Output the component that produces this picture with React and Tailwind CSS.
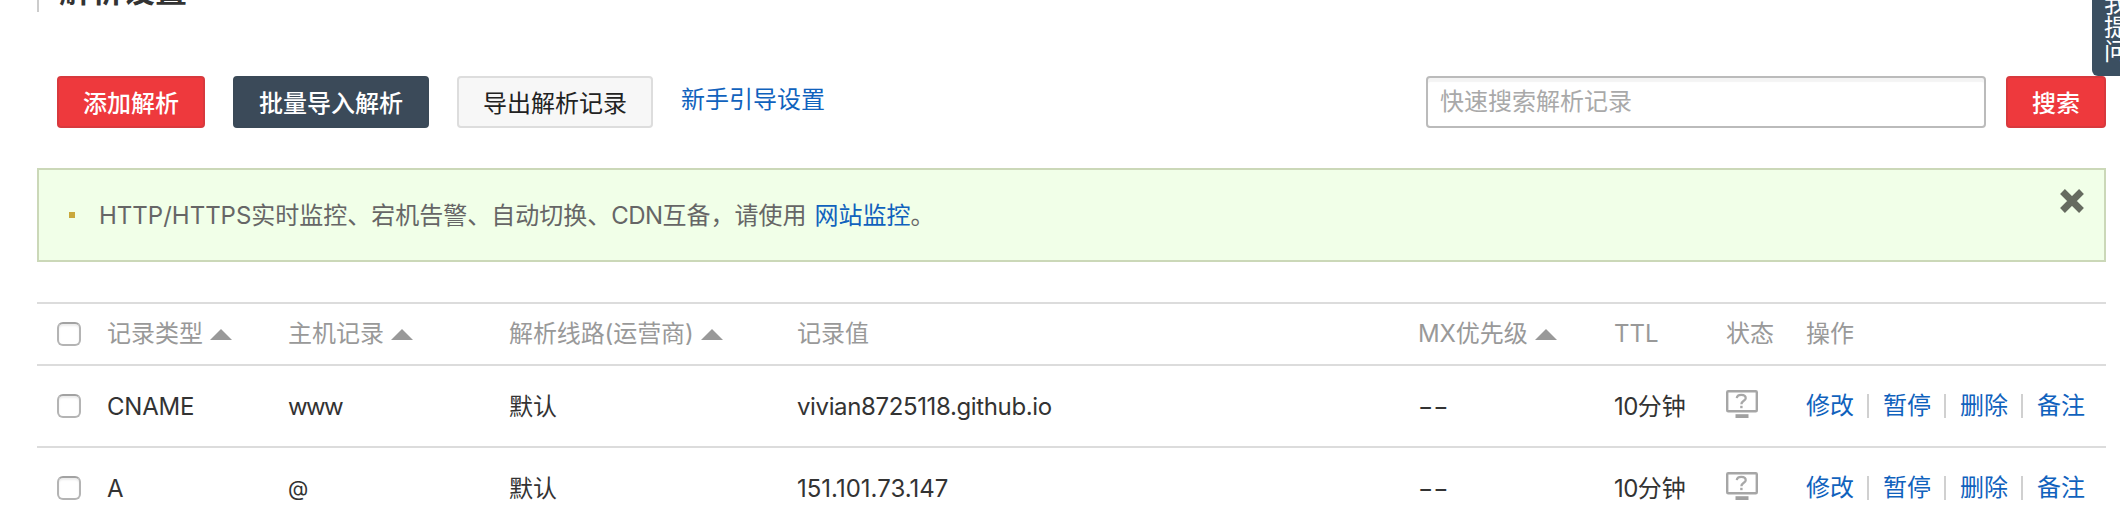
import clsx from "clsx";

const records = [
  { type: "CNAME", host: "www", line: "默认", value: "vivian8725118.github.io", mx: "--", ttl: "10分钟" },
  { type: "A", host: "@", line: "默认", value: "151.101.73.147", mx: "--", ttl: "10分钟" },
];

const columns = [
  { label: "记录类型", sortable: true },
  { label: "主机记录", sortable: true },
  { label: "解析线路(运营商)", sortable: true, className: "tracking-[-0.1px]" },
  { label: "记录值" },
  { label: "MX优先级", sortable: true, className: "tracking-[-0.1px]" },
  { label: "TTL" },
  { label: "状态" },
  { label: "操作" },
];

const actions = ["修改", "暂停", "删除", "备注"];

const rowGrid =
  "grid grid-cols-[70px_181px_221px_288px_621px_196px_112px_80px_1fr] items-center border-b-2 border-[#dcdcdc]";

const Button = ({ className, children }) => (
  <button
    className={clsx(
      "flex h-[52px] items-center justify-center rounded-[4px] border-2 pt-[3px] text-[24px] leading-none",
      className
    )}
  >
    {children}
  </button>
);

const Checkbox = () => (
  <span className="ml-[20px] size-6 rounded-[6px] border-2 border-[#b4b4b4] border-t-[#a2a2a2] bg-white shadow-[inset_0_2px_2px_#ececec]" />
);

const SortArrow = () => (
  <svg className="ml-[7px] h-[11px] w-[22px]" viewBox="0 0 22 11">
    <path d="M11 0L22 11H0z" fill="#999" />
  </svg>
);

// Màn hình với dấu hỏi: trạng thái chưa rõ
const MonitorIcon = () => (
  <svg className="relative -top-[2px] h-[28px] w-[32px]" viewBox="0 0 32 28" fill="none">
    <rect x="1.2" y="1.2" width="29.6" height="20" rx="1" stroke="#a6a6a6" strokeWidth="2.4" />
    <path
      d="M10.8 8.2C11 5.8 12.8 4.8 15.3 4.8C18 4.8 19.7 6 19.7 8.2C19.7 10.8 15.4 10.8 15.4 14.2"
      stroke="#a8a8a8"
      strokeWidth="2.3"
    />
    <path d="M14.2 15.8h2.4v2.4h-2.4z" fill="#a8a8a8" />
    <path d="M9.5 24.2h13v3.8h-13z" fill="#a0a0a0" />
  </svg>
);

const Toolbar = () => (
  <div className="mt-[64px] flex h-[52px] pl-[20px]">
    <Button className="w-[148px] border-[#d8393d] bg-[#ee393d] font-medium text-white">添加解析</Button>
    <Button className="ml-[28px] w-[196px] border-[#3a4957] bg-[#3b4a59] font-medium text-white">
      批量导入解析
    </Button>
    <Button className="ml-[28px] w-[196px] border-[#dddddd] bg-[#f7f7f7] text-[#222]">导出解析记录</Button>
    <a className="ml-[28px] leading-[48px] text-[#1062bd]">新手引导设置</a>
    <input
      className="ml-auto h-[52px] w-[560px] rounded-[4px] border-2 border-[#bbbbbb] px-[12px] pb-[1px] shadow-[inset_0_4px_1px_#f4f4f4] placeholder:text-[#a9a9a9]"
      placeholder="快速搜索解析记录"
    />
    <Button className="ml-[20px] w-[100px] border-[#d8393d] bg-[#ee393d] font-medium text-white">搜索</Button>
  </div>
);

const Notice = () => (
  <div className="mt-[40px] flex h-[94px] items-center border-2 border-[#cbd8b8] bg-[#f1ffe8] text-[#666]">
    <span className="ml-[30px] size-[6px] bg-[#c9a83c]" />
    <p className="ml-[24px] pt-[2px]">
      HTTP/HTTPS实时监控、宕机告警、自动切换、
      <span className="tracking-[-0.6px]">CDN</span>互备，请使用
      <a className="ml-[8px] text-[#1062bd]">网站监控</a>。
    </p>
    <svg className="mr-[20px] mb-[28px] ml-auto size-6" viewBox="0 0 24 24">
      <path d="M2.5 2.5L21.5 21.5M21.5 2.5L2.5 21.5" stroke="#666b60" strokeWidth="6.8" />
    </svg>
  </div>
);

const RecordRow = ({ record }) => (
  <div className={clsx(rowGrid, "h-[82px] text-[#333]")}>
    <Checkbox />
    <span className="pt-[1px] tracking-[-0.2px]">{record.type}</span>
    <span className={clsx("pt-[1px]", record.host === "@" ? "text-[21px]" : "tracking-[-1.6px]")}>
      {record.host}
    </span>
    <span className="pt-[1px]">{record.line}</span>
    <span className={clsx("pt-[1px]", record.type !== "A" && "tracking-[-0.37px]")}>{record.value}</span>
    <span className="origin-left scale-x-[1.38] pt-[1px]">{record.mx}</span>
    <span className="pt-[1px]">
      <span className="tracking-[-0.6px]">10</span>
      {record.ttl.slice(2)}
    </span>
    <MonitorIcon />
    <div className="flex items-center text-[#1062bd]">
      {actions.map((action, i) => (
        <span key={action} className="flex items-center">
          {i > 0 && <i className="mr-[14px] ml-[13px] h-6 w-[2px] bg-[#d0d0d0]" />}
          {action}
        </span>
      ))}
    </div>
  </div>
);

const App = () => {
  return (
    <div className="relative h-[528px] overflow-hidden bg-white pr-[14px] pl-[37px] font-['Inter','Noto_Sans_CJK_SC',sans-serif] text-[24px] leading-[36px]">
      <div className="flex h-[12px] items-end border-l-2 border-[#cccccc] pb-[3px] pl-[20px]">
        <h1 className="text-[32px] leading-[36px] font-bold text-[#333]">解析设置</h1>
      </div>

      <Toolbar />
      <Notice />

      {/* Bảng bản ghi */}
      <div className="mt-[40px] border-t-2 border-[#dcdcdc]">
        <div className={clsx(rowGrid, "h-[62px] text-[#999]")}>
          <Checkbox />
          {columns.map(({ label, sortable, className }) => (
            <span key={label} className={clsx("flex items-center whitespace-nowrap", className)}>
              {label}
              {sortable && <SortArrow />}
            </span>
          ))}
        </div>
        {records.map((record) => (
          <RecordRow key={record.value} record={record} />
        ))}
      </div>

      {/* Nút hỏi nổi ở mép phải */}
      <div className="absolute top-0 right-0 flex h-[76px] w-[28px] flex-col justify-end overflow-hidden rounded-bl-[6px] bg-[#3b4f61] pb-[12px] pl-[12px] leading-[24px] text-white">
        <span>我</span>
        <span>提</span>
        <span>问</span>
      </div>
    </div>
  );
};

export default App;
